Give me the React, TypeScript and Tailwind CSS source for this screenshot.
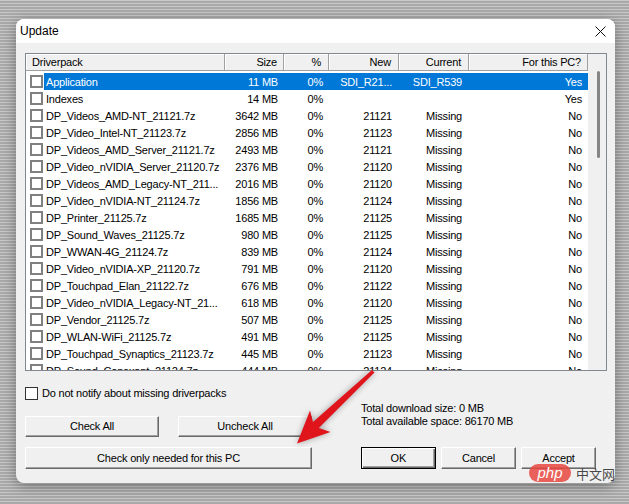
import React from "react";

type Row = { name: string; size: string; pct: string; nw: string; cur: string; pc: string };

const rows: Row[] = [
  { name: "Application", size: "11 MB", pct: "0%", nw: "SDI_R21...", cur: "SDI_R539", pc: "Yes" },
  { name: "Indexes", size: "14 MB", pct: "0%", nw: "", cur: "", pc: "Yes" },
  { name: "DP_Videos_AMD-NT_21121.7z", size: "3642 MB", pct: "0%", nw: "21121", cur: "Missing", pc: "No" },
  { name: "DP_Video_Intel-NT_21123.7z", size: "2856 MB", pct: "0%", nw: "21123", cur: "Missing", pc: "No" },
  { name: "DP_Videos_AMD_Server_21121.7z", size: "2493 MB", pct: "0%", nw: "21121", cur: "Missing", pc: "No" },
  { name: "DP_Video_nVIDIA_Server_21120.7z", size: "2376 MB", pct: "0%", nw: "21120", cur: "Missing", pc: "No" },
  { name: "DP_Videos_AMD_Legacy-NT_211...", size: "2016 MB", pct: "0%", nw: "21120", cur: "Missing", pc: "No" },
  { name: "DP_Video_nVIDIA-NT_21124.7z", size: "1856 MB", pct: "0%", nw: "21124", cur: "Missing", pc: "No" },
  { name: "DP_Printer_21125.7z", size: "1685 MB", pct: "0%", nw: "21125", cur: "Missing", pc: "No" },
  { name: "DP_Sound_Waves_21125.7z", size: "980 MB", pct: "0%", nw: "21125", cur: "Missing", pc: "No" },
  { name: "DP_WWAN-4G_21124.7z", size: "839 MB", pct: "0%", nw: "21124", cur: "Missing", pc: "No" },
  { name: "DP_Video_nVIDIA-XP_21120.7z", size: "791 MB", pct: "0%", nw: "21120", cur: "Missing", pc: "No" },
  { name: "DP_Touchpad_Elan_21122.7z", size: "676 MB", pct: "0%", nw: "21122", cur: "Missing", pc: "No" },
  { name: "DP_Video_nVIDIA_Legacy-NT_21...", size: "618 MB", pct: "0%", nw: "21120", cur: "Missing", pc: "No" },
  { name: "DP_Vendor_21125.7z", size: "507 MB", pct: "0%", nw: "21125", cur: "Missing", pc: "No" },
  { name: "DP_WLAN-WiFi_21125.7z", size: "491 MB", pct: "0%", nw: "21125", cur: "Missing", pc: "No" },
  { name: "DP_Touchpad_Synaptics_21123.7z", size: "445 MB", pct: "0%", nw: "21123", cur: "Missing", pc: "No" },
  { name: "DP_Sound_Conexant_21124.7z", size: "444 MB", pct: "0%", nw: "21124", cur: "Missing", pc: "No" },
];

const hdrCell =
  "h-full flex items-center border-r border-b border-r-[#a0a0a0] border-b-[#a0a0a0] bg-[#f0f0f0] shadow-[inset_1px_1px_0_#ffffff] whitespace-nowrap overflow-hidden";

const btn =
  "flex items-center justify-center text-[11px] tracking-[-0.2px] text-black bg-[#f0f0f0] border border-t-white border-l-white border-r-[#696969] border-b-[#696969] shadow-[inset_-1px_-1px_0_#a0a0a0]";

function Header() {
  return (
    <div className="flex h-[17px] text-[11px] tracking-[-0.2px] text-black shrink-0">
      <div className={`${hdrCell} w-[199px] pl-[6px]`}>Driverpack</div>
      <div className={`${hdrCell} w-[59px] justify-end pr-[6px]`}>Size</div>
      <div className={`${hdrCell} w-[45px] justify-end pr-[7px]`}>%</div>
      <div className={`${hdrCell} w-[70px] justify-end pr-[7px]`}>New</div>
      <div className={`${hdrCell} w-[70px] justify-end pr-[7px]`}>Current</div>
      <div className={`${hdrCell} w-[119px] justify-end pr-[6px]`}>For this PC?</div>
    </div>
  );
}

function ListRow({ r, sel }: { r: Row; sel: boolean }) {
  return (
    <div className="flex h-[17px] items-center text-[11px] tracking-[-0.2px] shrink-0">
      <div className="w-[18px] h-full flex items-center pl-[4px]">
        <div className="w-[13px] h-[13px] border-[2px] border-[#808080] bg-white" />
      </div>
      <div className={`flex h-full items-center pt-[1px] ${sel ? "bg-[#0078d7] text-white" : "text-black"}`}>
        <div className="w-[181px] pl-[2px] whitespace-nowrap overflow-hidden">{r.name}</div>
        <div className="w-[59px] text-right pr-[6px] whitespace-nowrap">{r.size}</div>
        <div className="w-[45px] text-right pr-[6px] whitespace-nowrap">{r.pct}</div>
        <div className="w-[70px] text-right pr-[7px] whitespace-nowrap">{r.nw}</div>
        <div className="w-[70px] text-right pr-[7px] whitespace-nowrap">{r.cur}</div>
        <div className="w-[119px] text-right pr-[6px] whitespace-nowrap">{r.pc}</div>
      </div>
    </div>
  );
}

export default function App() {
  return (
    <div className="w-[629px] h-[504px] relative overflow-hidden pt-[19px] pl-[16px] font-['Liberation_Sans',Arial,sans-serif] bg-[repeating-linear-gradient(180deg,#c8c8c8_0px,#c8c8c8_1px,#a9a9a9_1px,#a9a9a9_3px)]">
      <div className="w-[599px] h-[464px] rounded-[8px] overflow-hidden bg-[#f0f0f0] flex flex-col shadow-[0_3px_14px_rgba(0,0,0,0.35)]">
        {/* title bar */}
        <div className="h-[24px] shrink-0 bg-white flex items-center justify-between pl-[4px] pr-[9px]">
          <span className="text-[12px] text-black">Update</span>
          <svg width="11" height="11" viewBox="0 0 11 11">
            <path d="M0.5 0.5 L10.5 10.5 M10.5 0.5 L0.5 10.5" stroke="#111" strokeWidth="1" fill="none" />
          </svg>
        </div>
        {/* body */}
        <div className="flex-1 flex flex-col pl-[9px] pt-[10px]">
          <div className="w-[582px] h-[318px] border border-[#828790] bg-white flex overflow-hidden">
            <div className="w-[562px] flex flex-col overflow-hidden">
              <Header />
              <div className="pt-[2px] flex flex-col">
                {rows.map((r, i) => (
                  <ListRow key={i} r={r} sel={i === 0} />
                ))}
              </div>
            </div>
            <div className="w-[18px] h-full bg-[#f0f0f0] pt-[17px] pl-[9px]">
              <div className="w-[3px] h-[87px] rounded-full bg-[#858585]" />
            </div>
          </div>

          <div className="mt-[16px] h-[12px] flex items-center">
            <div className="w-[13px] h-[13px] border border-[#333333] bg-white" />
            <span className="ml-[4px] text-[11px] tracking-[-0.2px] text-black">Do not notify about missing driverpacks</span>
          </div>

          <div className="flex">
            <div className="w-[287px] pt-[17px] flex flex-col gap-[10px]">
              <div className="flex justify-between">
                <div className={`${btn} w-[134px] h-[21px]`}>Check All</div>
                <div className={`${btn} w-[134px] h-[21px]`}>Uncheck All</div>
              </div>
              <div className={`${btn} w-[287px] h-[22px]`}>Check only needed for this PC</div>
            </div>
            <div className="ml-[49px] pt-[3px] flex flex-col">
              <div className="text-[11px] tracking-[-0.2px] leading-[13px] text-black">Total download size: 0 MB</div>
              <div className="text-[11px] tracking-[-0.2px] leading-[13px] text-black">Total available space: 86170 MB</div>
              <div className="mt-[19px] flex gap-[5px]">
                <div className="w-[75px] h-[22px] flex items-center justify-center text-[11px] text-black bg-[#f0f0f0] border border-black shadow-[inset_1px_1px_0_#ffffff,inset_-1px_-1px_0_#696969,inset_-2px_-2px_0_#a0a0a0]">
                  OK
                </div>
                <div className={`${btn} w-[75px] h-[22px]`}>Cancel</div>
                <div className={`${btn} w-[75px] h-[22px]`}>Accept</div>
              </div>
            </div>
          </div>
        </div>
      </div>

      {/* red annotation arrow */}
      <svg
        className="absolute left-0 top-0 pointer-events-none drop-shadow-[0_0_3px_rgba(0,0,0,0.35)]"
        width="629"
        height="504"
        viewBox="0 0 629 504"
      >
        <polygon
          points="374.5,372.5 318.8,428 330.5,432 297,443.5 310,410.5 313,422 372,370"
          fill="#e0141b"
        />
      </svg>

      {/* watermark */}
      <div className="absolute left-[529px] top-[464px] flex items-center pointer-events-none">
        <div className="w-[42px] h-[18px] rounded-full bg-[rgba(232,72,64,0.85)] flex items-center justify-center">
          <span className="text-[15px] leading-none italic text-white font-['Liberation_Sans',Arial,sans-serif] -mt-[2px]">php</span>
        </div>
        <span className="ml-[5px] text-[13px] leading-none text-[rgba(40,40,40,0.85)] font-['Noto_Sans_CJK_SC',sans-serif]">中文网</span>
      </div>
    </div>
  );
}
